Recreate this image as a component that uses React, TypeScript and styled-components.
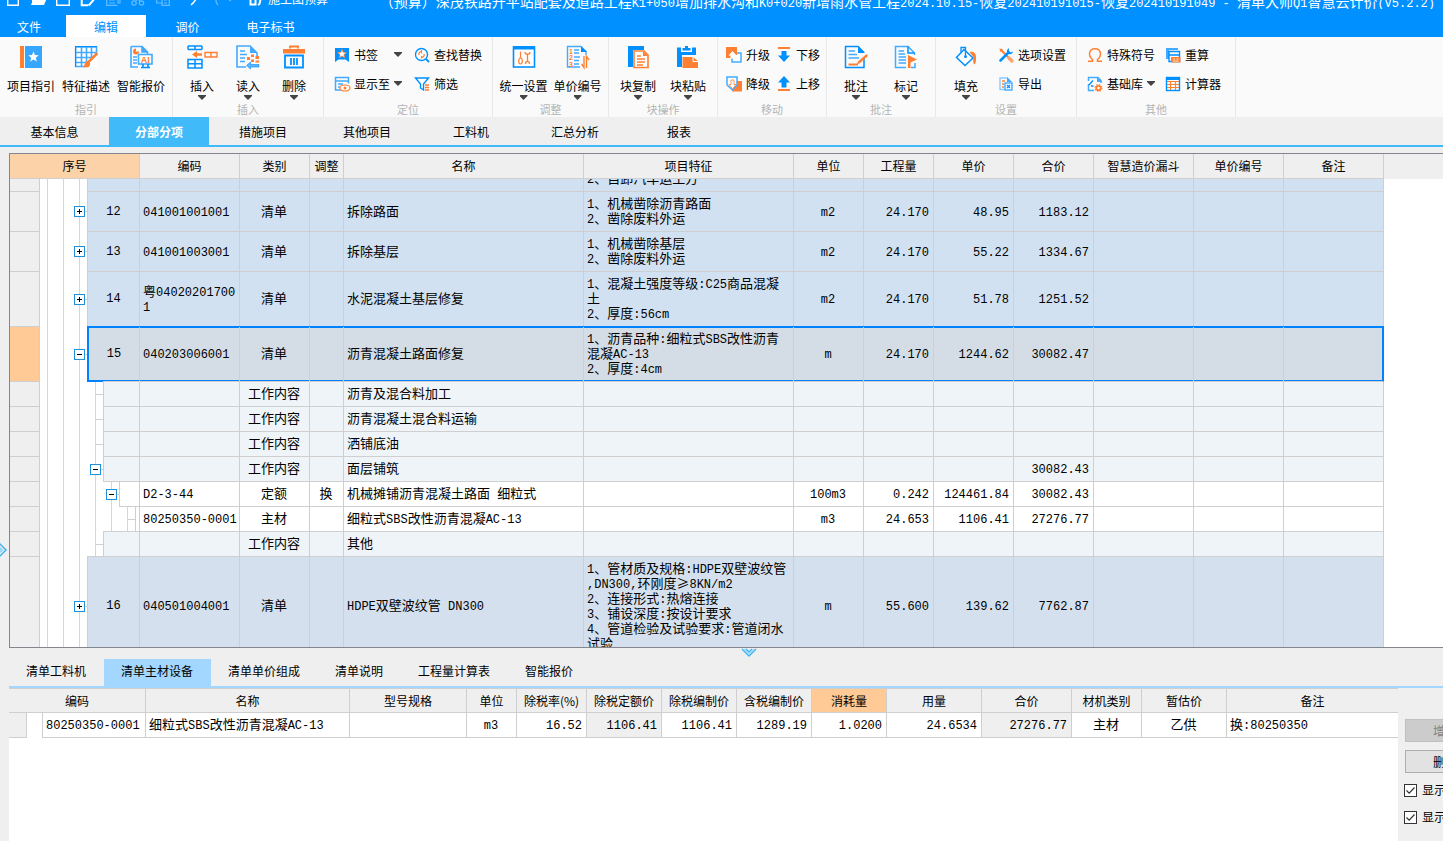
import React, { useLayoutEffect, useRef } from "react";
import styled, { createGlobalStyle, css } from "styled-components";

const BLUE = "#0090ff";
const SKY = "#44aaff";
const ORANGE = "#ff8033";
const LINE = "#cfcfcf";
const UI_FONT = '"Noto Sans CJK SC", "Noto Sans", sans-serif';
const MONO_FONT = '"Liberation Mono", "Noto Sans CJK SC", monospace';

const GlobalStyle = createGlobalStyle`
  *, *::before, *::after { box-sizing: border-box; }
  body { margin: 0; overflow: hidden; background: #efefef; }
  button { font: inherit; color: inherit; border: 0; padding: 0; margin: 0; background: none; cursor: default; }
  svg { display: block; flex: none; overflow: visible; }
`;

/* ---------- icons ---------- */

const star = (cx: number, cy: number, r: number) => {
  const pts: string[] = [];
  for (let i = 0; i < 10; i++) {
    const a = (Math.PI / 5) * i - Math.PI / 2;
    const q = i % 2 ? r * 0.45 : r;
    pts.push(`${(cx + q * Math.cos(a)).toFixed(2)},${(cy + q * Math.sin(a)).toFixed(2)}`);
  }
  return pts.join(" ");
};

const bigIcons: Record<string, React.ReactNode> = {
  guide: (
    <>
      <rect x="1" y="1" width="4" height="22" fill={ORANGE} />
      <rect x="6" y="1" width="17" height="22" fill="#36a6ff" />
      <polygon points={star(14.5, 12, 5.5)} fill="#fff" />
    </>
  ),
  feature: (
    <>
      <rect x="1" y="1" width="22" height="21" fill="#fff" />
      <path d="M1.700 1V22M7.500 1V22M12.500 1V22M17.500 1V13M22.500 1V10M1 2H23M1 7.500H23M1 12.500H19M1 17.500H13M1 21.500H10" stroke={SKY} strokeWidth="1.600" fill="none" />
      <path d="M1 1.500H23M1.500 1V22" stroke={BLUE} strokeWidth="1" fill="none" />
      <path d="M22.500 9L15 16.500" stroke={ORANGE} strokeWidth="2.600" strokeLinecap="round" />
      <path d="M13 16C16 16 17 19 15.500 21C13.500 23 11 22.500 8.500 22C11 21 10.500 17 13 16Z" fill={ORANGE} />
    </>
  ),
  quote: (
    <>
      <path d="M2 1.500H13L18.500 7V9M9 22H2V1.500M13 1.500V7H18.500" stroke={SKY} strokeWidth="1.600" fill="none" />
      <path d="M13 1L19 7H13Z" fill={SKY} />
      <path d="M7 3.500A3 3 0 1 0 10 6.500H7Z" fill={ORANGE} />
      <path d="M4 12H8M4 15H8M4 18H8" stroke={SKY} strokeWidth="1.400" />
      <rect x="9.500" y="9.500" width="13.500" height="9.500" fill="#fff" stroke={SKY} strokeWidth="1.600" />
      <path d="M12 22.500H21M14 19V22M19 19V22" stroke={BLUE} strokeWidth="1.600" />
      <text x="16.200" y="17.500" fontSize="9" fontWeight="700" fontFamily="Liberation Sans, sans-serif" textAnchor="middle" fill={ORANGE}>AI</text>
    </>
  ),
  insert: (
    <>
      <path d="M-2 1H12M-2 4.500H12M-2 1V4.500M5 1V4.500M12 1V4.500" stroke={BLUE} strokeWidth="1.500" fill="none" />
      <path d="M-2 14.500H12V23H-2ZM-2 18.700H12M5 14.500V23" stroke={BLUE} strokeWidth="1.500" fill="none" />
      <path d="M2 9.500L7 6V8.300H12V10.700H7V13Z" fill={ORANGE} />
      <path d="M15 7.500H27V12H15ZM21 7.500V12" stroke={ORANGE} strokeWidth="1.400" fill="none" />
    </>
  ),
  read: (
    <>
      <path d="M10 22H1V1H14L21 8V12" stroke={SKY} strokeWidth="1.600" fill="none" />
      <path d="M14 1V8H21Z" fill={SKY} />
      <path d="M4 6H9M4 9.500H11M4 13H9M4 16.500H9" stroke={SKY} strokeWidth="1.500" />
      <path d="M11 12H14V15H11ZM15 9.500H18V12H15ZM19.500 11H23V14H19.500ZM15 14.500H18V17H15ZM19.500 15.500H23V17.500H19.500Z" fill={ORANGE} />
      <path d="M10.500 20.500L14.500 17V19.500H23V22H14.500V24Z" fill="#5db5ff" stroke={BLUE} strokeWidth=".6" />
    </>
  ),
  trash: (
    <>
      <path d="M8 3.500V1.500H16V3.500" stroke={ORANGE} strokeWidth="1.800" fill="none" />
      <rect x="1" y="4" width="22" height="4.500" fill={ORANGE} />
      <path d="M3 10.500H21V22.500H3ZM9 13V20M12 13V20M15 13V20" stroke={BLUE} strokeWidth="1.800" fill="none" />
    </>
  ),
  config: (
    <>
      <rect x="1.500" y="2" width="21" height="20" fill="#fff" stroke={BLUE} strokeWidth="1.600" />
      <rect x="1" y="1" width="22" height="3.500" fill={BLUE} />
      <path d="M8.500 6.500V13" stroke={ORANGE} strokeWidth="1.200" />
      <ellipse cx="8.500" cy="16" rx="1.800" ry="3" fill="none" stroke={ORANGE} strokeWidth="1.200" />
      <path d="M13 7C13 10 18 10 18 7M15.500 9V16M13.500 19C13.500 15.500 17.500 15.500 17.500 19" stroke={ORANGE} strokeWidth="1.300" fill="none" />
    </>
  ),
  number: (
    <>
      <path d="M14 22H1.500V1.500H15M15 1.500L20 6.500V10" stroke={SKY} strokeWidth="1.400" fill="none" />
      <path d="M15 1L21 7H15Z" fill={BLUE} />
      <path d="M8 5H13M8 8H13M8 12H14M8 15.500H13M8 19H13" stroke={SKY} strokeWidth="1.400" />
      <text x="5" y="8.500" fontSize="7" fontWeight="700" fontFamily="Liberation Sans, sans-serif" textAnchor="middle" fill={ORANGE}>1</text>
      <text x="5" y="15" fontSize="7" fontWeight="700" fontFamily="Liberation Sans, sans-serif" textAnchor="middle" fill={ORANGE}>2</text>
      <text x="5" y="21.500" fontSize="7" fontWeight="700" fontFamily="Liberation Sans, sans-serif" textAnchor="middle" fill={ORANGE}>3</text>
      <path d="M18 11V22.500L15.500 19M20.500 23V11.500L23 15" stroke={ORANGE} strokeWidth="1.400" fill="none" />
    </>
  ),
  blockCopy: (
    <>
      <path d="M2 1H18V5H7V22H2Z" fill={BLUE} />
      <path d="M8 6H18L22 10V22.500H8Z" fill="#fff" stroke={ORANGE} strokeWidth="1.600" />
      <path d="M17 6V11H22Z" fill={ORANGE} />
      <path d="M11 11H15M11 14H19M11 17H19M11 20H17" stroke={ORANGE} strokeWidth="1.300" />
    </>
  ),
  blockPaste: (
    <>
      <path d="M1 2.500H5V7H16V2.500H20V10H6V22H1Z" fill={BLUE} />
      <path d="M6.500 5.500V3H9V1H12V3H14.500V5.500Z" fill={BLUE} />
      <path d="M6.500 12H17L22 16V23H6.500Z" fill={ORANGE} />
      <path d="M17 12V16.500H22" stroke="#fff" strokeWidth="1" fill="none" />
    </>
  ),
  note: (
    <>
      <path d="M20 14V22.500H1.500V1.500H14L20 7.500" stroke={BLUE} strokeWidth="1.500" fill="none" />
      <path d="M14 1L21 8H14Z" fill={BLUE} />
      <path d="M4.500 6H11M4.500 9.500H13M4.500 13H15" stroke={SKY} strokeWidth="1.500" />
      <path d="M4.500 19.500H14" stroke={ORANGE} strokeWidth="2" />
      <path d="M22.500 9L24 11L15.500 18.500L13 19L14 16.500Z" fill={ORANGE} />
    </>
  ),
  mark: (
    <>
      <path d="M12 22.500H1.500V1.500H14L20.500 8V10M17 22.500H21V18" stroke={SKY} strokeWidth="1.500" fill="none" />
      <path d="M14 1.500V8H20.500" stroke={BLUE} strokeWidth="1.500" fill="none" />
      <path d="M4.500 6H10M4.500 9H11M4.500 12H12M4.500 15H12M4.500 18H12" stroke={SKY} strokeWidth="1.300" />
      <path d="M14 10L23 14.500L16.500 17.500V23H14Z" fill={ORANGE} />
    </>
  ),
  fill: (
    <>
      <path d="M10 4.500L19 13L11 20.500L2.500 12.500Z" stroke={BLUE} strokeWidth="1.500" fill="#fff" />
      <path d="M7 7V2.500H11.500V10.500" stroke={BLUE} strokeWidth="1.300" fill="none" />
      <circle cx="11.500" cy="11.500" r="1.500" fill={BLUE} />
      <path d="M15.500 7C20 6 22.500 9 22 13C22 16 22 18 20.500 19.500C18.500 18 19.500 14 19 11.500Z" fill={ORANGE} />
    </>
  ),
};

const smallIcons: Record<string, React.ReactNode> = {
  bookmark: (
    <>
      <path d="M1 1H15V15L11.500 12.500L8 12.500L4.500 12.500L1 15Z" fill={BLUE} />
      <polygon points={star(8, 7, 4.5)} fill="#fff" stroke={ORANGE} strokeWidth=".8" />
    </>
  ),
  showTo: (
    <>
      <path d="M7 14H1.500V1.500H14.500V7.500M1.500 5H14.500M4 8H9M4 11H6" stroke={SKY} strokeWidth="1.500" fill="none" />
      <ellipse cx="11" cy="12" rx="5" ry="3" fill="#fff" stroke={ORANGE} strokeWidth="1.200" />
      <circle cx="11" cy="12" r="1.500" fill={ORANGE} />
    </>
  ),
  findReplace: (
    <>
      <circle cx="7.500" cy="7.500" r="6" fill="#fff" stroke={BLUE} strokeWidth="1.400" />
      <path d="M12 12L15 15" stroke={BLUE} strokeWidth="1.800" />
      <path d="M5 8A2.500 2.500 0 0 1 7.500 4.500M10 7A2.500 2.500 0 0 1 7.500 10.500M7.500 3V6.500M7.500 9V11.500" stroke={ORANGE} strokeWidth="1.200" fill="none" />
    </>
  ),
  filter: (
    <>
      <path d="M1.500 2H14.500L9.500 8V14L6.500 12V8Z" fill="#fff" stroke={BLUE} strokeWidth="1.400" />
      <path d="M11 9H15M11 11.500H15M11 14H15" stroke={ORANGE} strokeWidth="1.300" />
    </>
  ),
  promote: (
    <>
      <rect x="6" y="6" width="9" height="9" fill="#fff" stroke={SKY} strokeWidth="1.500" />
      <path d="M0 0H11V8H8V11H0Z" fill={ORANGE} />
      <path d="M6.500 4L10.500 8.500H8.500V11.500H4.500V8.500H2.500Z" fill="#fff" />
    </>
  ),
  demote: (
    <>
      <rect x="6" y="5" width="10" height="10.500" fill={ORANGE} />
      <path d="M1 1H11V7L11 9L6.500 14L1 9Z" fill="#fff" stroke={SKY} strokeWidth="1.500" />
      <path d="M6.500 13L10 8.500H8V4H5V8.500H3Z" fill="#fff" stroke={ORANGE} strokeWidth=".8" />
    </>
  ),
  moveDown: (
    <>
      <rect x="2" y="0" width="12" height="2" fill={ORANGE} />
      <path d="M5.500 4H10.500V8.500H14L8 15L2 8.500H5.500Z" fill={BLUE} />
    </>
  ),
  moveUp: (
    <>
      <rect x="2" y="13" width="12" height="2" fill={ORANGE} />
      <path d="M5.500 11.500H10.500V6.500H14L8 0L2 6.500H5.500Z" fill={BLUE} />
    </>
  ),
  options: (
    <>
      <path d="M4 4L14 14" stroke={ORANGE} strokeWidth="2" />
      <path d="M1.500 1.500L4.500 2L5 5L2 4.500Z" fill={ORANGE} />
      <path d="M11 11L14 14" stroke="#ffa470" strokeWidth="3.400" strokeLinecap="round" />
      <path d="M2.500 13.500L10 6" stroke={BLUE} strokeWidth="2.600" strokeLinecap="round" />
      <path d="M11 1C8.500 2.500 8.500 5.500 10 6.500C12 8 14.500 7 15 4.500L12.500 5.500L10.800 3.500Z" fill={BLUE} />
    </>
  ),
  exportFile: (
    <>
      <path d="M7 13.500H2V2H9L13 6" stroke="#8ccbff" strokeWidth="1.400" fill="none" />
      <path d="M9 1L14 6H9Z" fill={SKY} />
      <path d="M4 5H7M4 8H6M4 11H6" stroke={ORANGE} strokeWidth="1.300" />
      <rect x="7" y="7" width="7" height="7" fill="#fff" stroke={SKY} strokeWidth="1.400" />
      <path d="M9 9L12 12M12 9L9 12" stroke={BLUE} strokeWidth="1.300" />
    </>
  ),
  omega: (
    <path d="M1 14.300H5.500V12.500C1 9 1.500 1.700 8 1.700C14.500 1.700 15 9 10.500 12.500V14.300H15" stroke={ORANGE} strokeWidth="1.500" fill="none" />
  ),
  library: (
    <>
      <path d="M1.500 5V1.500H11L14 4.500V7M1.500 8V14.500H7" stroke={SKY} strokeWidth="1.500" fill="none" />
      <path d="M10 1L15 6H10Z" fill={SKY} />
      <path d="M2 9L6 4.500M4 10H6.500" stroke={BLUE} strokeWidth="1.300" />
      <circle cx="11.500" cy="12" r="2.200" fill="#fff" stroke={ORANGE} strokeWidth="1.800" />
      <circle cx="11.500" cy="12" r="3.400" fill="none" stroke={ORANGE} strokeWidth="1.200" strokeDasharray="1.400 1.270" />
    </>
  ),
  recalc: (
    <>
      <path d="M1 1H13V3H4V12H1Z" fill={SKY} />
      <path d="M4 4.500H14.500V14.500H4ZM4 8H14.500" stroke={BLUE} strokeWidth="1.400" fill="#fff" />
      <rect x="6" y="10" width="9.500" height="5.500" fill={ORANGE} />
      <path d="M8 12H10M11.500 12H13.500M8 14H13.500" stroke="#fff" strokeWidth=".8" />
    </>
  ),
  calculator: (
    <>
      <rect x="1.500" y="1.500" width="13" height="13" fill="#fff" />
      <path d="M2 5.500H14M2 8.500H14M2 11.500H14M5.500 5V14M10.500 5V14" stroke={ORANGE} strokeWidth="1.200" />
      <rect x="1.500" y="1.500" width="13" height="13" fill="none" stroke={BLUE} strokeWidth="1.400" />
      <path d="M1 3H15" stroke={BLUE} strokeWidth="2" />
    </>
  ),
};

const quickIcons: { left: number; faded?: boolean; art: React.ReactNode }[] = [
  { left: 7, art: <path d="M.7 0V13.300H11.300V0" stroke="#fff" strokeWidth="1.400" fill="none" /> },
  { left: 31, art: <path d="M3 6H16L13 13H0ZM1 11V2H13V5" fill="#fff" /> },
  { left: 56, art: <path d="M.7 0V13.300H13.300V0M4 2H10" stroke="#fff" strokeWidth="1.400" fill="none" /> },
  { left: 81, art: <path d="M7 13.300H.7V0M12 0V5M15 5L9 12L7.500 13.500" stroke="#fff" strokeWidth="2" fill="none" /> },
  { left: 106, faded: true, art: <path d="M.7 0V13.300H11.300M3 8H9M3 11H9M12 0V11H14V0" stroke="#fff" strokeWidth="1.200" fill="none" /> },
  {
    left: 131,
    faded: true,
    art: (
      <g stroke="#fff" strokeWidth="1.200" fill="none">
        <circle cx="3" cy="11" r="2.200" />
        <circle cx="10.500" cy="11" r="2.200" />
        <path d="M4.500 9.500L11 1M9 9.500L3 1" />
      </g>
    ),
  },
  { left: 156, faded: true, art: <path d="M7 11H.7V0M6 4H13.300V13.300H6ZM8 8H11M8 11H11" stroke="#fff" strokeWidth="1.200" fill="none" /> },
  { left: 189, art: <path d="M1 4C8 1 10 6 2 13" stroke="#fff" strokeWidth="1.500" fill="none" /> },
  { left: 214, faded: true, art: <path d="M4 13C-1 7 4 4 12 6M14 7L17 9" stroke="#fff" strokeWidth="1.300" fill="none" /> },
  { left: 249, art: <path d="M1.500 0V12.500H6.500V3H1.500M13 1L10.500 12L9 13M9 4H14" stroke="#fff" strokeWidth="2" fill="none" /> },
];

/* ---------- title bar ---------- */

const Page = styled.div`
  display: flex;
  flex-direction: column;
  height: 100vh;
  overflow: hidden;
  background: #efefef;
  color: #000;
  font: 12px/16px ${UI_FONT};
`;

const Header = styled.header`
  background: ${BLUE};
  color: #fff;
`;

const TitleStrip = styled.div`
  display: flex;
  align-items: flex-end;
  justify-content: space-between;
  height: 9px;
  margin-bottom: 6px;
  padding-right: 8px;
  overflow: hidden;
  white-space: nowrap;
`;

const QuickBar = styled.div`
  position: relative;
  display: flex;
  align-items: flex-end;
  flex: none;
  width: 340px;
  height: 16px;
`;

const QuickButton = styled.button<{ $left: number; $faded?: boolean }>`
  position: absolute;
  left: ${(p) => p.$left}px;
  bottom: 3px;
  opacity: ${(p) => (p.$faded ? 0.4 : 1)};
`;

const ProjectKind = styled.span`
  margin-left: 268px;
  margin-bottom: 2px;
`;

const WindowTitle = styled.h1`
  margin: 0;
  font: 400 14px/16px ${UI_FONT};
`;

const MenuTabs = styled.nav`
  display: flex;
  height: 22px;
  padding-right: 8px;
`;

const MenuTab = styled.button<{ $active?: boolean }>`
  width: ${(p) => (p.$active ? 80 : 83)}px;
  padding-top: 1px;
  color: ${(p) => (p.$active ? BLUE : "#fff")};
  background: ${(p) => (p.$active ? "#fff" : "transparent")};

  &:first-child {
    width: 58px;
    margin-right: 8px;
  }
`;

/* ---------- ribbon ---------- */

const Ribbon = styled.div`
  display: flex;
  flex: none;
  height: 80px;
  background: #fafafa;
`;

const Group = styled.section<{ $width: number }>`
  display: flex;
  flex-direction: column;
  flex: none;
  width: ${(p) => p.$width}px;
  padding-top: 3px;
  border-right: 1px solid #e9e9e9;
`;

const GroupBody = styled.div<{ $gap: number; $pad?: number }>`
  display: flex;
  flex: 1;
  gap: ${(p) => p.$gap}px;
  justify-content: ${(p) => (p.$pad ? "flex-start" : "center")};
  padding-left: ${(p) => p.$pad ?? 0}px;
`;

const GroupName = styled.div`
  flex: none;
  text-align: center;
  font-size: 11px;
  color: #b4b4b4;
`;

const LargeButton = styled.button<{ $width: number }>`
  display: flex;
  flex-direction: column;
  align-items: center;
  width: ${(p) => p.$width}px;
  padding-top: 5px;
  white-space: nowrap;
`;

const LargeLabel = styled.span`
  margin-top: 9px;
  margin-bottom: 1px;
`;

const SmallColumn = styled.div`
  display: flex;
  flex-direction: column;
`;

const SmallButton = styled.button`
  display: flex;
  align-items: center;
  gap: 4px;
  height: 29px;
  white-space: nowrap;
`;

const Caret = styled.span<{ $push?: boolean }>`
  width: 8px;
  height: 5px;
  margin-left: ${(p) => (p.$push ? "auto" : "0")};
  background: #444;
  clip-path: polygon(0 0, 100% 0, 100% 20%, 50% 100%, 0 20%);
`;

type Small = { icon: string; label: string; menu?: boolean };
type Large = { icon: string; label: string; menu?: boolean };
type GroupSpec = {
  name: string;
  width: number;
  gap: number;
  pad?: number;
  buttonWidth?: number;
  large?: Large[];
  columns?: Small[][];
};

const groups: GroupSpec[] = [
  {
    name: "指引", width: 173, gap: 7, buttonWidth: 48,
    large: [
      { icon: "guide", label: "项目指引" },
      { icon: "feature", label: "特征描述" },
      { icon: "quote", label: "智能报价" },
    ],
  },
  {
    name: "插入", width: 151, gap: 1, buttonWidth: 45,
    large: [
      { icon: "insert", label: "插入", menu: true },
      { icon: "read", label: "读入", menu: true },
      { icon: "trash", label: "删除", menu: true },
    ],
  },
  {
    name: "定位", width: 169, gap: 12, pad: 10,
    columns: [
      [{ icon: "bookmark", label: "书签", menu: true }, { icon: "showTo", label: "显示至", menu: true }],
      [{ icon: "findReplace", label: "查找替换" }, { icon: "filter", label: "筛选" }],
    ],
  },
  {
    name: "调整", width: 116, gap: 6, buttonWidth: 48,
    large: [
      { icon: "config", label: "统一设置", menu: true },
      { icon: "number", label: "单价编号", menu: true },
    ],
  },
  {
    name: "块操作", width: 109, gap: 0, buttonWidth: 50,
    large: [
      { icon: "blockCopy", label: "块复制", menu: true },
      { icon: "blockPaste", label: "块粘贴", menu: true },
    ],
  },
  {
    name: "移动", width: 109, gap: 6, pad: 8,
    columns: [
      [{ icon: "promote", label: "升级" }, { icon: "demote", label: "降级" }],
      [{ icon: "moveDown", label: "下移" }, { icon: "moveUp", label: "上移" }],
    ],
  },
  {
    name: "批注", width: 109, gap: 0, buttonWidth: 50,
    large: [
      { icon: "note", label: "批注", menu: true },
      { icon: "mark", label: "标记", menu: true },
    ],
  },
  {
    name: "设置", width: 141, gap: 7, pad: 5, buttonWidth: 50,
    large: [{ icon: "fill", label: "填充", menu: true }],
    columns: [[{ icon: "options", label: "选项设置" }, { icon: "exportFile", label: "导出" }]],
  },
  {
    name: "其他", width: 159, gap: 10, pad: 10,
    columns: [
      [{ icon: "omega", label: "特殊符号" }, { icon: "library", label: "基础库", menu: true }],
      [{ icon: "recalc", label: "重算" }, { icon: "calculator", label: "计算器" }],
    ],
  },
];

/* ---------- section tabs ---------- */

const SectionTabs = styled.nav`
  display: flex;
  flex: none;
  height: 30px;
  border-bottom: 2px solid #41baf9;
`;

const SectionTab = styled.button<{ $active?: boolean }>`
  width: 104px;
  padding-top: 2px;

  &:first-child {
    width: 109px;
  }

  ${(p) =>
    p.$active &&
    css`
      width: 100px;
      margin-right: 2px;
      color: #fff;
      font-weight: 700;
      background: #41baf9;
    `}
`;

/* ---------- data grids ---------- */

const Workspace = styled.main`
  position: relative;
  display: flex;
  flex: 1;
  flex-direction: column;
  min-height: 0;
  padding: 6px 0 0 9px;
`;

const GridFrame = styled.div`
  flex: 1;
  min-height: 0;
  overflow: hidden;
  border: solid #85858e;
  border-width: 1px 0 1px 1px;
  background: #fff;
`;

const GridTable = styled.table`
  width: 100%;
  table-layout: fixed;
  border-collapse: separate;
  border-spacing: 0;
`;

const HeadCell = styled.th<{ $hot?: boolean }>`
  position: sticky;
  top: 0;
  z-index: 2;
  height: 25px;
  padding: 0;
  overflow: hidden;
  font-weight: 400;
  white-space: nowrap;
  background: ${(p) => (p.$hot ? "#fcd3a9" : "#efefef")};
  border: solid ${LINE};
  border-width: 0 1px 1px 0;

  &:last-child {
    border-width: 0;
  }
`;

const Row = styled.tr<{ $height: number; $tint: string }>`
  height: ${(p) => p.$height}px;
  background: ${(p) => p.$tint};
`;

const Cell = styled.td<{ $align?: string; $selected?: boolean }>`
  padding: 0 4px 3px 3px;
  font-size: 13px;
  line-height: 15px;
  text-align: ${(p) => p.$align ?? "left"};
  white-space: pre;
  border: solid ${LINE};
  border-width: 0 1px 1px 0;
  ${(p) =>
    p.$selected &&
    css`
      box-shadow: inset 0 -1px 0 #0082ff, inset 0 1px 0 #0082ff, 0 -1px 0 #0082ff;

      &:nth-last-child(2) {
        border-right-color: #0082ff;
        box-shadow: inset -1px -1px 0 #0082ff, inset 0 1px 0 #0082ff, 0 -1px 0 #0082ff;
      }
    `}
`;

const Gutter = styled.td<{ $current?: boolean }>`
  padding: 0;
  background: ${(p) => (p.$current ? "#ffca96" : "#efefef")};
  border: solid ${LINE};
  border-width: 0 1px 1px 0;
`;

const Blank = styled.td`
  padding: 0;
  background: #fff;
`;

const TreeTd = styled.td`
  position: relative;
  padding: 0;
  background: #fff;
`;

const TreeLine = styled.div`
  position: absolute;
  inset: -1px 0 0;
  display: flex;
`;

const Indent = styled.span<{ $stub?: boolean }>`
  display: flex;
  flex: none;
  align-items: center;
  justify-content: center;
  width: 16px;
  background:
    linear-gradient(${LINE}, ${LINE}) 8px 50% / ${(p) => (p.$stub ? "8px 1px" : "0 0")} no-repeat,
    linear-gradient(#d6d6d6, #d6d6d6) 7px 0 / 1px 100% no-repeat;
`;

const Toggle = styled.button<{ $open?: boolean }>`
  flex: none;
  width: 11px;
  height: 11px;
  margin-right: 1px;
  border: 1px solid #1f90da;
  background:
    linear-gradient(#000, #000) center / 5px 1px no-repeat,
    linear-gradient(#000, #000) center / ${(p) => (p.$open ? "0 0" : "1px 5px")} no-repeat,
    #fff;
`;

const TreeValue = styled.span<{ $tint: string; $selected?: boolean }>`
  display: flex;
  flex: 1;
  align-items: center;
  justify-content: center;
  margin-left: -1px;
  z-index: 1;
  font-size: 13px;
  background: ${(p) => p.$tint};
  border: 1px solid ${LINE};
  ${(p) =>
    p.$selected &&
    css`
      border-width: 2px 1px 2px 2px;
      border-color: #0082ff ${LINE} #0082ff #0082ff;
    `}
`;

const Latin = styled.span`
  font: 12px/8px ${MONO_FONT};
`;

/* Half-width runs sit on a fixed pitch, full-width characters keep the table font. */
const Mixed = ({ children }: { children: string }) => (
  <>
    {children.split(/([\x20-\x7e]+)/).map((part, i) => (i % 2 ? <Latin key={i}>{part}</Latin> : part))}
  </>
);

const columns: { title: string; width: number; align?: string }[] = [
  { title: "编码", width: 100 },
  { title: "类别", width: 70, align: "center" },
  { title: "调整", width: 34, align: "center" },
  { title: "名称", width: 240 },
  { title: "项目特征", width: 210 },
  { title: "单位", width: 70, align: "center" },
  { title: "工程量", width: 70, align: "right" },
  { title: "单价", width: 80, align: "right" },
  { title: "合价", width: 80, align: "right" },
  { title: "智慧造价漏斗", width: 100 },
  { title: "单价编号", width: 90 },
  { title: "备注", width: 100 },
];

type Item = {
  level: number;
  no?: string;
  toggle?: "open" | "closed";
  height: number;
  selected?: boolean;
  tint?: string;
  values: string[];
};

const work = (name: string, total = "", toggle?: "open"): Item => ({
  level: 2, height: 25, toggle, values: ["", "工作内容", "", name, "", "", "", "", total],
});

const items: Item[] = [
  { level: 1, no: "11", toggle: "closed", height: 40, values: ["040103002001", "清单", "", "余方弃置", "1、废弃料品种:土方\n2、自卸汽车运土方", "m3", "24.170", "21.36", "516.27"] },
  { level: 1, no: "12", toggle: "closed", height: 40, values: ["041001001001", "清单", "", "拆除路面", "1、机械凿除沥青路面\n2、凿除废料外运", "m2", "24.170", "48.95", "1183.12"] },
  { level: 1, no: "13", toggle: "closed", height: 40, values: ["041001003001", "清单", "", "拆除基层", "1、机械凿除基层\n2、凿除废料外运", "m2", "24.170", "55.22", "1334.67"] },
  { level: 1, no: "14", toggle: "closed", height: 55, values: ["粤04020201700\n1", "清单", "", "水泥混凝土基层修复", "1、混凝土强度等级:C25商品混凝\n土\n2、厚度:56cm", "m2", "24.170", "51.78", "1251.52"] },
  { level: 1, no: "15", toggle: "open", height: 55, selected: true, values: ["040203006001", "清单", "", "沥青混凝土路面修复", "1、沥青品种:细粒式SBS改性沥青\n混凝AC-13\n2、厚度:4cm", "m", "24.170", "1244.62", "30082.47"] },
  work("沥青及混合料加工"),
  work("沥青混凝土混合料运输"),
  work("洒铺底油"),
  work("面层铺筑", "30082.43", "open"),
  { level: 3, toggle: "open", height: 25, values: ["D2-3-44", "定额", "换", "机械摊铺沥青混凝土路面 细粒式", "", "100m3", "0.242", "124461.84", "30082.43"] },
  { level: 4, height: 25, values: ["80250350-0001", "主材", "", "细粒式SBS改性沥青混凝AC-13", "", "m3", "24.653", "1106.41", "27276.77"] },
  work("其他"),
  { level: 1, no: "16", toggle: "closed", height: 99, tint: "#d5e0ee", values: ["040501004001", "清单", "", "HDPE双壁波纹管 DN300", "1、管材质及规格:HDPE双壁波纹管\n,DN300,环刚度≥8KN/m2\n2、连接形式:热熔连接\n3、铺设深度:按设计要求\n4、管道检验及试验要求:管道闭水\n试验", "m", "55.600", "139.62", "7762.87"] },
];

const tintOf = (item: Item) =>
  item.tint ?? (item.selected ? "#d4dde6" : item.level === 1 ? "#d2e1f2" : item.level === 2 ? "#eff4f9" : "#ffffff");

const indentsOf = (item: Item) => {
  const count = item.level + 2;
  return Array.from({ length: count }, (_, i) => {
    const last = i === count - 1;
    return (
      <Indent key={i} $stub={last}>
        {last && item.toggle && (
          <Toggle $open={item.toggle === "open"} aria-label={item.toggle === "open" ? "收起" : "展开"} />
        )}
      </Indent>
    );
  });
};

function MainGrid() {
  const frame = useRef<HTMLDivElement>(null);
  useLayoutEffect(() => {
    if (frame.current) frame.current.scrollTop = 27;
  }, []);

  return (
    <GridFrame ref={frame}>
      <GridTable>
        <colgroup>
          <col width={30} />
          <col width={100} />
          {columns.map((c) => (
            <col key={c.title} width={c.width} />
          ))}
          <col />
        </colgroup>
        <thead>
          <tr>
            <HeadCell colSpan={2} $hot>序号</HeadCell>
            {columns.map((c) => (
              <HeadCell key={c.title}>{c.title}</HeadCell>
            ))}
            <HeadCell />
          </tr>
        </thead>
        <tbody>
          {items.map((item, r) => {
            const tint = tintOf(item);
            return (
              <Row key={r} $height={item.height} $tint={tint}>
                <Gutter $current={item.selected} />
                <TreeTd>
                  <TreeLine>
                    {indentsOf(item)}
                    <TreeValue $tint={tint} $selected={item.selected}>
                      {item.no && <Mixed>{item.no}</Mixed>}
                    </TreeValue>
                  </TreeLine>
                </TreeTd>
                {columns.map((c, i) => (
                  <Cell key={c.title} $align={c.align} $selected={item.selected}>
                    <Mixed>{item.values[i] ?? ""}</Mixed>
                  </Cell>
                ))}
                <Blank />
              </Row>
            );
          })}
        </tbody>
      </GridTable>
    </GridFrame>
  );
}

/* ---------- detail pane ---------- */

const Detail = styled.section`
  display: flex;
  flex: none;
  flex-direction: column;
  height: 193px;
  padding-left: 9px;
`;

const DetailTabs = styled.nav`
  display: flex;
  flex: none;
  height: 40px;
  padding-top: 11px;
  border-bottom: 2px solid #a3d7ff;
`;

const DetailTab = styled.button<{ $active?: boolean }>`
  padding: 0 18px 3px 17px;
  background: ${(p) => (p.$active ? "#a3d7ff" : "transparent")};
`;

const DetailBody = styled.div`
  display: flex;
  flex: 1;
  min-height: 0;
`;

const DetailGrid = styled.div`
  flex: 1;
  min-width: 0;
  border-top: 1px solid ${LINE};
  background: #fff;
`;

const DetailHead = styled(HeadCell)`
  height: 24px;
  ${(p) => p.$hot && "background: #ffca96;"}

  &:last-child {
    border-width: 0 0 1px;
  }
`;

const DetailCell = styled(Cell)<{ $locked?: boolean }>`
  background: ${(p) => (p.$locked ? "#efefef" : "#fff")};

  &:last-child {
    border-right: 0;
  }
`;

const DetailIndent = styled.td`
  padding: 0;
  border-right: 1px solid ${LINE};
`;

const SidePanel = styled.aside`
  display: flex;
  flex: none;
  flex-direction: column;
  align-items: flex-start;
  width: 45px;
  padding: 31px 0 0 6px;
  overflow: hidden;
`;

const PushButton = styled.button`
  flex: none;
  width: 80px;
  height: 23px;
  margin: 0 0 8px 1px;
  background: #e2e2e2;
  border: 1px solid #adadad;

  &:disabled {
    color: #838383;
    background: #cccccc;
    border-color: #bfbfbf;
  }
`;

const CheckLabel = styled.label`
  display: flex;
  align-items: center;
  gap: 5px;
  height: 18px;
  margin-bottom: 9px;
  white-space: nowrap;
`;

const CheckBox = styled.input`
  appearance: none;
  flex: none;
  width: 13px;
  height: 13px;
  margin: 0;
  border: 1px solid #333;
  background: #fff;

  &:checked {
    background: #fff
      url("data:image/svg+xml,%3Csvg xmlns='http://www.w3.org/2000/svg' viewBox='0 0 11 11'%3E%3Cpath d='M1.500 5.500L4.200 8.200L9.500 2.500' fill='none' stroke='%23333' stroke-width='1.200'/%3E%3C/svg%3E")
      center / 11px 11px no-repeat;
  }
`;

const detailColumns: { title: string; width?: number; align?: string; locked?: boolean; hot?: boolean; value: string }[] = [
  { title: "名称", width: 204, value: "细粒式SBS改性沥青混凝AC-13" },
  { title: "型号规格", width: 117, value: "" },
  { title: "单位", width: 50, align: "center", value: "m3" },
  { title: "除税率(%)", width: 70, align: "right", value: "16.52" },
  { title: "除税定额价", width: 75, align: "right", locked: true, value: "1106.41" },
  { title: "除税编制价", width: 75, align: "right", value: "1106.41" },
  { title: "含税编制价", width: 75, align: "right", value: "1289.19" },
  { title: "消耗量", width: 75, align: "right", hot: true, value: "1.0200" },
  { title: "用量", width: 95, align: "right", value: "24.6534" },
  { title: "合价", width: 90, align: "right", locked: true, value: "27276.77" },
  { title: "材机类别", width: 70, align: "center", value: "主材" },
  { title: "暂估价", width: 85, align: "center", value: "乙供" },
  { title: "备注", value: "换:80250350" },
];

/* ---------- splitter handles ---------- */

const Splitter = styled.div`
  position: absolute;
  z-index: 3;
`;

const LeftSplitter = styled(Splitter)`
  left: 0;
  bottom: 90px;
`;

const BottomSplitter = styled(Splitter)`
  left: 740px;
  bottom: -10px;
`;

export default function App() {
  return (
    <Page>
      <GlobalStyle />
      <Header>
        <TitleStrip>
          <QuickBar>
            {quickIcons.map((q) => (
              <QuickButton key={q.left} $left={q.left} $faded={q.faded}>
                <svg width="14" height="14" viewBox="0 0 14 14">{q.art}</svg>
              </QuickButton>
            ))}
            <ProjectKind>施工图预算</ProjectKind>
          </QuickBar>
          <WindowTitle>
            <Mixed>
              （预算）深茂铁路开平站配套及道路工程K1+050增加排水沟和K0+020新增雨水管工程2024.10.15-恢复202410191015-恢复202410191049 - 清单大师Q1智慧云计价(V5.2.2)
            </Mixed>
          </WindowTitle>
        </TitleStrip>
        <MenuTabs>
          <MenuTab>文件</MenuTab>
          <MenuTab $active>编辑</MenuTab>
          <MenuTab>调价</MenuTab>
          <MenuTab>电子标书</MenuTab>
        </MenuTabs>
      </Header>

      <Ribbon>
        {groups.map((g) => (
          <Group key={g.name} $width={g.width}>
            <GroupBody $gap={g.gap} $pad={g.pad}>
              {g.large?.map((b) => (
                <LargeButton key={b.label} $width={g.buttonWidth ?? 48}>
                  <svg width="24" height="24" viewBox="0 0 24 24">{bigIcons[b.icon]}</svg>
                  <LargeLabel>{b.label}</LargeLabel>
                  {b.menu && <Caret />}
                </LargeButton>
              ))}
              {g.columns?.map((col, i) => (
                <SmallColumn key={i}>
                  {col.map((b) => (
                    <SmallButton key={b.label}>
                      <svg width="16" height="16" viewBox="0 0 16 16">{smallIcons[b.icon]}</svg>
                      {b.label}
                      {b.menu && <Caret $push />}
                    </SmallButton>
                  ))}
                </SmallColumn>
              ))}
            </GroupBody>
            <GroupName>{g.name}</GroupName>
          </Group>
        ))}
      </Ribbon>

      <SectionTabs>
        {["基本信息", "分部分项", "措施项目", "其他项目", "工料机", "汇总分析", "报表"].map((t) => (
          <SectionTab key={t} $active={t === "分部分项"}>{t}</SectionTab>
        ))}
      </SectionTabs>

      <Workspace>
        <MainGrid />
        <LeftSplitter>
          <svg width="8" height="16" viewBox="0 0 8 16">
            <path d="M-1 1L6 8L-1 15M-4 3L2 8L-4 13" fill="none" stroke="#41b4ee" strokeWidth="1.500" />
            <path d="M-1 5L3 8L-1 11Z" fill="#9ddcff" />
          </svg>
        </LeftSplitter>
        <BottomSplitter>
          <svg width="18" height="9" viewBox="0 0 18 9">
            <path d="M2 0L9 7L16 0M6 0L9 3L12 0" fill="none" stroke="#41b4ee" strokeWidth="1.500" />
            <path d="M4 0L9 5L14 0" fill="none" stroke="#9ddcff" strokeWidth="1.200" />
          </svg>
        </BottomSplitter>
      </Workspace>

      <Detail>
        <DetailTabs>
          {["清单工料机", "清单主材设备", "清单单价组成", "清单说明", "工程量计算表", "智能报价"].map((t) => (
            <DetailTab key={t} $active={t === "清单主材设备"}>{t}</DetailTab>
          ))}
        </DetailTabs>
        <DetailBody>
          <DetailGrid>
            <GridTable>
              <colgroup>
                <col width={18} />
                <col width={16} />
                <col width={103} />
                {detailColumns.map((c) => (
                  <col key={c.title} width={c.width} />
                ))}
              </colgroup>
              <thead>
                <tr>
                  <DetailHead colSpan={3}>编码</DetailHead>
                  {detailColumns.map((c) => (
                    <DetailHead key={c.title} $hot={c.hot}>{c.title}</DetailHead>
                  ))}
                </tr>
              </thead>
              <tbody>
                <Row $height={25} $tint="#ffffff">
                  <Gutter />
                  <DetailIndent />
                  <DetailCell><Mixed>80250350-0001</Mixed></DetailCell>
                  {detailColumns.map((c) => (
                    <DetailCell key={c.title} $align={c.align} $locked={c.locked}>
                      <Mixed>{c.value}</Mixed>
                    </DetailCell>
                  ))}
                </Row>
              </tbody>
            </GridTable>
          </DetailGrid>
          <SidePanel>
            <PushButton disabled>增加</PushButton>
            <PushButton>删除</PushButton>
            <CheckLabel>
              <CheckBox type="checkbox" defaultChecked />
              显示
            </CheckLabel>
            <CheckLabel>
              <CheckBox type="checkbox" defaultChecked />
              显示
            </CheckLabel>
          </SidePanel>
        </DetailBody>
      </Detail>
    </Page>
  );
}
